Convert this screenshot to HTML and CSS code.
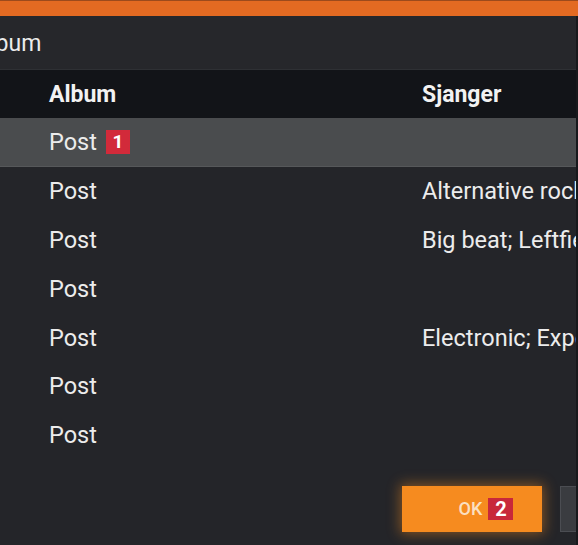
FILE: index.html
```html
<!DOCTYPE html>
<html lang="no">
<head>
<meta charset="utf-8">
<title>Album</title>
<link rel="stylesheet" href="styles.css">
</head>
<body>
<div class="topbar"></div>
<div class="dialog">
  <div class="dialog-title"><span class="title-text">Album</span></div>
  <div class="table">
    <div class="row head">
      <div class="cell">Album</div>
      <div class="cell">Sjanger</div>
    </div>
    <div class="row selected">
      <div class="cell">Post <span class="badge">1</span></div>
      <div class="cell"></div>
    </div>
    <div class="row">
      <div class="cell">Post</div>
      <div class="cell">Alternative rock</div>
    </div>
    <div class="row">
      <div class="cell">Post</div>
      <div class="cell">Big beat; Leftfield; Trip hop</div>
    </div>
    <div class="row">
      <div class="cell">Post</div>
      <div class="cell"></div>
    </div>
    <div class="row">
      <div class="cell">Post</div>
      <div class="cell">Electronic; Experimental; Trip hop</div>
    </div>
    <div class="row">
      <div class="cell">Post</div>
      <div class="cell"></div>
    </div>
    <div class="row">
      <div class="cell">Post</div>
      <div class="cell"></div>
    </div>
  </div>
  <div class="footer">
    <button class="btn btn-ok">OK <span class="badge badge-btn">2</span></button>
    <button class="btn btn-cancel">Avbryt</button>
  </div>
</div>
</body>
</html>
```
FILE: styles.css
```css
html, body {
  margin: 0;
  padding: 0;
}
body {
  width: 578px;
  height: 545px;
  overflow: hidden;
  background: #242529;
  font-family: Roboto, "Liberation Sans", sans-serif;
  color: #ececec;
}
.topbar {
  height: 15px;
  background: #e36a22;
  border-top: 1px solid #9c4a1c;
}
.dialog {
  height: 529px;
  display: flex;
  flex-direction: column;
  border-right: 2px solid #18191c;
  overflow: hidden;
}
.dialog-title {
  height: 53px;
  display: flex;
  align-items: center;
  background: #26272b;
  border-bottom: 1px solid #2e3034;
  font-size: 23px;
  white-space: nowrap;
  overflow: hidden;
}
.title-text {
  margin-left: -25px;
  padding-top: 1px;
}
.table {
  display: flex;
  flex-direction: column;
}
.row {
  height: 48.8px;
  display: grid;
  grid-template-columns: 373px 400px;
  align-items: center;
  padding-left: 49px;
  font-size: 23.5px;
  white-space: nowrap;
  overflow: hidden;
}
.row.head {
  height: 48px;
  background: #121418;
  font-weight: 700;
  font-size: 23px;
  color: #f2f2f2;
}
.row.selected {
  background: #4a4c4e;
  border-bottom: 1px solid #56585a;
  box-sizing: border-box;
}
.cell {
  display: flex;
  align-items: center;
  gap: 9px;
}
.badge {
  display: inline-flex;
  align-items: center;
  justify-content: center;
  width: 24px;
  height: 24px;
  background: #d22a3a;
  color: #ffffff;
  font-weight: 700;
  font-size: 19px;
}
.footer {
  flex: 1;
  display: flex;
  justify-content: flex-end;
  align-items: flex-start;
  padding-top: 26px;
  gap: 18px;
  overflow: hidden;
}
.btn {
  height: 46px;
  border: none;
  font-family: Roboto, "Liberation Sans", sans-serif;
  flex-shrink: 0;
  margin: 0;
}
.btn-ok {
  width: 140px;
  background: #f68b1f;
  color: #fbe0c2;
  font-size: 18px;
  font-weight: 500;
  display: flex;
  align-items: center;
  justify-content: center;
  gap: 6px;
  padding: 0 0 0 28px;
  box-shadow: 0 0 12px 2px rgba(246, 139, 31, 0.45);
}
.badge-btn {
  width: 25px;
  height: 22px;
  font-size: 20px;
  background: #c8283a;
}
.btn-cancel {
  width: 16px;
  background: #3a3c40;
  border: 1px solid #4b4d52;
  border-right: none;
  color: transparent;
  font-size: 1px;
  overflow: hidden;
  padding: 0;
}
```
